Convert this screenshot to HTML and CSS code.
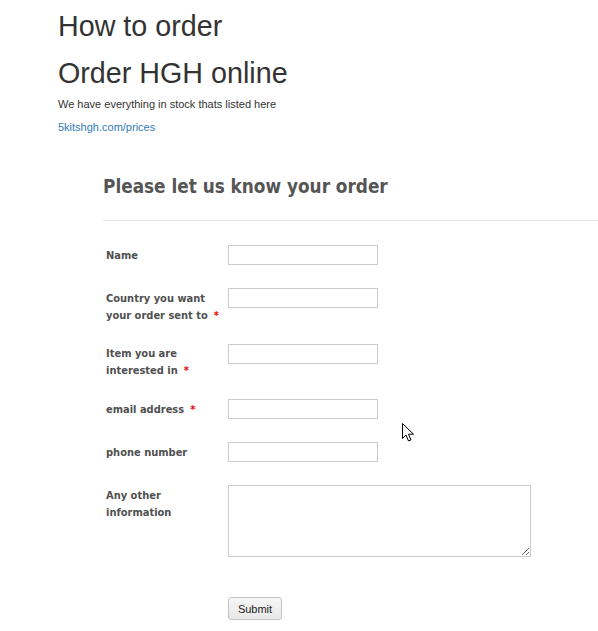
FILE: index.html
```html
<!DOCTYPE html>
<html lang="en">
<head>
    <meta charset="UTF-8">
    <meta name="viewport" content="width=device-width, initial-scale=1.0">
    <title>How to order</title>
    <link rel="stylesheet" href="styles.css">
</head>
<body>
    <div class="page">
        <h1 class="title">How to order</h1>
        <h1 class="title title-second">Order HGH online</h1>
        <p class="intro">We have everything in stock thats listed here</p>
        <p class="intro intro-link"><a href="#">5kitshgh.com/prices</a></p>

        <div class="order-form">
            <h2 class="form-heading">Please let us know your order</h2>
            <hr class="form-rule">

            <form class="form-grid" onsubmit="return false">
                <label class="field-label" for="f-name">Name</label>
                <div class="field"><input type="text" id="f-name"></div>

                <label class="field-label" for="f-country">Country you want your order sent to<span class="req">*</span></label>
                <div class="field"><input type="text" id="f-country"></div>

                <label class="field-label" for="f-item">Item you are interested in<span class="req">*</span></label>
                <div class="field"><input type="text" id="f-item"></div>

                <label class="field-label" for="f-email">email address<span class="req">*</span></label>
                <div class="field"><input type="text" id="f-email"></div>

                <label class="field-label" for="f-phone">phone number</label>
                <div class="field"><input type="text" id="f-phone"></div>

                <label class="field-label" for="f-other">Any other information</label>
                <div class="field"><textarea id="f-other"></textarea></div>

                <div></div>
                <div class="field submit-row"><button type="submit">Submit</button></div>
            </form>
        </div>
    </div>

    <svg class="cursor" width="13" height="20" viewBox="0 0 13 20">
        <path d="M0.5 0.5 L0.5 15.5 L4 12 L6.5 18 L9 17 L6.5 11.2 L11.5 11.2 Z" fill="#fff" stroke="#000" stroke-width="1" stroke-linejoin="miter"/>
    </svg>
</body>
</html>
```

FILE: styles.css
```css
body {
    margin: 0;
    font-family: "Liberation Sans", Arial, sans-serif;
    color: #333;
    background: #fff;
    overflow: hidden;
}
.page {
    padding-left: 58px;
}
.title {
    font-size: 28.7px;
    font-weight: normal;
    line-height: 32px;
    margin: 10px 0 0;
}
.title-second {
    margin-top: 15px;
}
.intro {
    font-size: 11px;
    line-height: 15px;
    margin: 8px 0 0;
}
.intro-link a {
    color: #337ab7;
    text-decoration: none;
}
.order-form {
    margin: 40px 0 0 45px;
}
.form-heading {
    font-family: "DejaVu Sans Condensed", "DejaVu Sans", sans-serif;
    font-size: 18.8px;
    line-height: 24px;
    font-weight: bold;
    color: #555;
    margin: 0;
}
.form-rule {
    border: 0;
    border-top: 1px solid #e3e3e3;
    margin: 21px 0 0;
}
.form-grid {
    display: grid;
    grid-template-columns: 122px 1fr;
    row-gap: 20px;
    margin-top: 24px;
    padding-left: 3px;
}
.field-label {
    font-family: "DejaVu Sans Condensed", "DejaVu Sans", sans-serif;
    font-size: 11px;
    line-height: 17px;
    font-weight: bold;
    color: #505050;
    padding-top: 1.5px;
}
.req {
    color: #e00;
    margin-left: 6px;
}
.field {
    min-height: 23px;
}
.field input {
    display: block;
    box-sizing: border-box;
    width: 150px;
    height: 20px;
    border: 1px solid #ccc;
    margin: 0;
    padding: 2px 4px;
}
.field textarea {
    display: block;
    box-sizing: border-box;
    width: 303px;
    height: 72px;
    border: 1px solid #ccc;
    margin: 0;
}
.submit-row {
    margin-top: 20px;
}
.submit-row button {
    font-family: "Liberation Sans", Arial, sans-serif;
    font-size: 11px;
    color: #222;
    width: 54px;
    height: 23px;
    padding: 0;
    border: 1px solid #c4c4c4;
    border-radius: 3px;
    background: linear-gradient(#f6f6f6, #e8e8e8);
}
.cursor {
    position: absolute;
    left: 402px;
    top: 423px;
}
```
